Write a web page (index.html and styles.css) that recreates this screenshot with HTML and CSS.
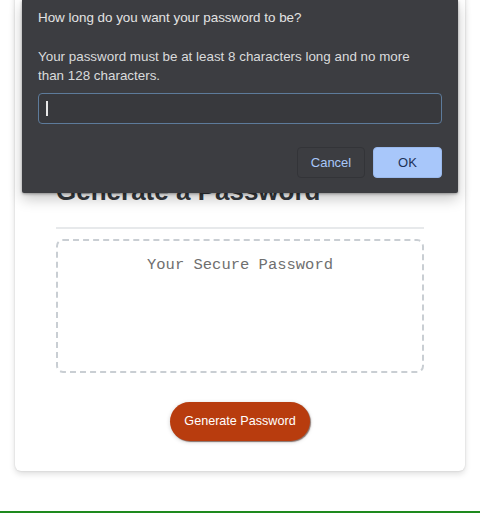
FILE: index.html
```html
<!DOCTYPE html>
<html lang="en">
<head>
<meta charset="utf-8">
<title>Password Generator</title>
<link rel="stylesheet" href="styles.css">
</head>
<body>
  <main class="page">
    <section class="card">
      <header class="card-header">
        <h2 class="card-title">Generate a Password</h2>
      </header>
      <div class="card-body">
        <div class="password-box">Your Secure Password</div>
      </div>
      <footer class="card-footer">
        <button class="btn" type="button">Generate Password</button>
      </footer>
    </section>
    <div class="green-rule"></div>
  </main>

  <div class="dialog" role="dialog">
    <p class="dialog-title">How long do you want your password to be?</p>
    <p class="dialog-msg">Your password must be at least 8 characters long and no more than 128 characters.</p>
    <div class="dialog-input"><span class="caret"></span></div>
    <div class="dialog-actions">
      <button class="dbtn dbtn-cancel" type="button">Cancel</button>
      <button class="dbtn dbtn-ok" type="button">OK</button>
    </div>
  </div>
</body>
</html>
```

FILE: styles.css
```css
html, body {
  margin: 0;
  padding: 0;
  background: #ffffff;
}

body {
  width: 480px;
  height: 513px;
  overflow: hidden;
  position: relative;
  font-family: "Liberation Sans", Arial, sans-serif;
}

.page {
  display: flex;
  flex-direction: column;
}

.card {
  margin: -20px 15px 0;
  padding: 196px 41px 30px;
  background: #ffffff;
  border-radius: 6px;
  box-shadow: 0 3px 6px rgba(0, 0, 0, 0.13), 0 0 2px rgba(0, 0, 0, 0.16);
}

.card-title {
  margin: 0 0 21px;
  font-size: 26px;
  line-height: 30px;
  font-weight: bold;
  color: #34383c;
}

.card-header::after,
.card-footer::before {
  content: "";
  display: block;
  height: 2px;
  background: #e7e9eb;
}

.card-body {
  padding: 10px 0 11px;
}

.password-box {
  box-sizing: border-box;
  height: 134px;
  padding: 15px 15px 0;
  border: 2px dashed #c9ced3;
  border-radius: 7px;
  text-align: center;
  font-family: "Liberation Mono", "Courier New", monospace;
  font-size: 15.5px;
  line-height: 18px;
  color: #6f6f6f;
}

.card-footer {
  display: flex;
  flex-direction: column;
  align-items: center;
}

.btn {
  margin-top: 16px;
  width: 140px;
  height: 39px;
  padding: 0;
  border: none;
  border-radius: 20px;
  background: #b83c0e;
  color: #ffffff;
  font-family: "Liberation Sans", Arial, sans-serif;
  font-size: 12.6px;
  line-height: 15px;
  box-shadow: 1px 1px 1px rgba(60, 20, 10, 0.55), 0 1px 4px rgba(0, 0, 0, 0.18);
}

.green-rule {
  margin-top: 40px;
  height: 2px;
  background: #1e8a1e;
}

/* Browser prompt overlay */
.dialog {
  position: absolute;
  top: 0;
  left: 22px;
  width: 436px;
  height: 193px;
  box-sizing: border-box;
  padding: 8px 16px 15px;
  background: #3c3d41;
  border-radius: 0 0 2px 2px;
  box-shadow: 0 6px 14px rgba(0, 0, 0, 0.22), 0 1px 3px rgba(0, 0, 0, 0.35);
  color: #e3e3e3;
  font-family: "Liberation Sans", Arial, sans-serif;
  font-size: 13.4px;
  display: flex;
  flex-direction: column;
}

.dialog p {
  margin: 0;
  line-height: 19px;
}

.dialog-msg {
  margin-top: 20px !important;
  padding-right: 14px;
  color: #dadbdc;
}

.dialog-input {
  margin-top: 8px;
  height: 31px;
  box-sizing: border-box;
  border: 1.5px solid #5d7b9b;
  border-radius: 4px;
  background: #38393d;
  display: flex;
  align-items: center;
  padding-left: 7px;
}

.caret {
  display: block;
  width: 1.5px;
  height: 15px;
  background: #e8e8e8;
}

.dialog-actions {
  margin-top: 23px;
  display: flex;
  justify-content: flex-end;
  gap: 8px;
}

.dbtn {
  height: 31px;
  border-radius: 4px;
  font-family: "Liberation Sans", Arial, sans-serif;
  font-size: 13px;
  padding: 0;
}

.dbtn-cancel {
  width: 68px;
  background: #3c3d41;
  border: 1px solid #333438;
  color: #a8c7fa;
}

.dbtn-ok {
  width: 69px;
  background: #a8c7fa;
  border: 1px solid #9ab9ec;
  color: #1d3258;
}
```
